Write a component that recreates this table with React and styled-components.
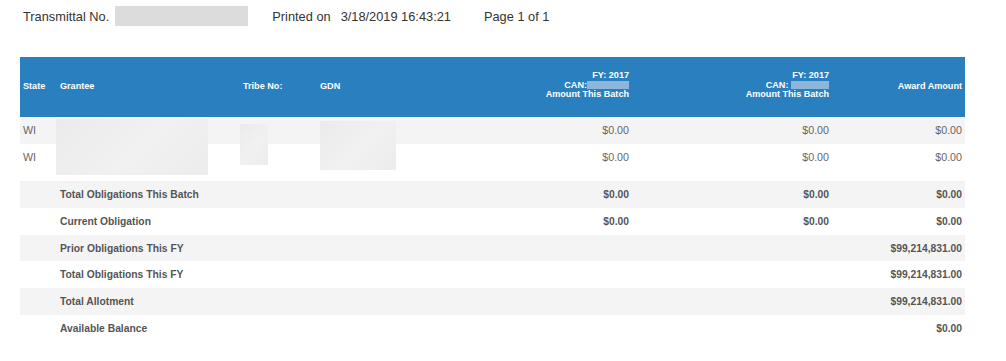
import React from "react";
import styled, { createGlobalStyle } from "styled-components";

const Global = createGlobalStyle`
  html, body { margin: 0; padding: 0; background: #fff; }
  body { font-family: "Liberation Sans", Arial, sans-serif; }
`;

const Page = styled.div`
  width: 1006px;
  padding: 6px 20px 0 20px;
  box-sizing: border-box;
`;

const TitleBar = styled.div`
  display: flex;
  align-items: center;
  height: 20px;
  padding-left: 3px;
  margin-bottom: 31px;
  font-size: 12.8px;
  color: #333;
`;

const TitleText = styled.span`
  margin-left: ${(p) => p.$gap || 0}px;
  white-space: nowrap;
`;

const RedactBar = styled.span`
  display: inline-block;
  width: 133px;
  height: 20px;
  margin-left: 6px;
  background: #dcdcdc;
`;

const Table = styled.table`
  width: 945px;
  table-layout: fixed;
  border-collapse: collapse;
  border-spacing: 0;
`;

const HeadRow = styled.tr`
  height: 60px;
  background: #2a7fbe;
`;

const HeadCell = styled.th`
  padding: 0 ${(p) => (p.$right ? p.$pr || 4 : 3)}px ${(p) => (p.$stack ? 3 : 0)}px 3px;
  text-align: ${(p) => (p.$right ? "right" : "left")};
  color: #fff;
  font-size: 9.1px;
  font-weight: bold;
  line-height: 9.5px;
  vertical-align: middle;
  white-space: nowrap;
`;

const CanBox = styled.span`
  display: inline-block;
  width: ${(p) => p.$w}px;
  height: 8px;
  background: #8cb7db;
  vertical-align: -1px;
`;

const Row = styled.tr`
  height: 26.7px;
  background: ${(p) => (p.$shade ? "#f4f4f4" : "#fff")};
`;

const Cell = styled.td`
  position: relative;
  padding: 0 ${(p) => (p.$right ? p.$pr || 4 : 3)}px 0 3px;
  text-align: ${(p) => (p.$right ? "right" : "left")};
  color: ${(p) => (p.$bold ? "#555" : "#666")};
  font-size: ${(p) => (p.$bold ? "10.3px" : "10.7px")};
  font-weight: ${(p) => (p.$bold ? "bold" : "normal")};
  vertical-align: middle;
  white-space: nowrap;
`;

const Blur = styled.div`
  position: absolute;
  left: ${(p) => p.$x}px;
  top: ${(p) => p.$y}px;
  width: ${(p) => p.$w}px;
  height: ${(p) => p.$h}px;
  background: linear-gradient(135deg, #ebebeb 0%, #f1f1f1 55%, #ececec 100%);
  z-index: 1;
`;

const SpacerRow = styled.tr`
  height: 11px;
  border-bottom: 1px solid #f1f1f1;
`;

const summary = [
  ["Total Obligations This Batch", "$0.00", "$0.00", "$0.00"],
  ["Current Obligation", "$0.00", "$0.00", "$0.00"],
  ["Prior Obligations This FY", "", "", "$99,214,831.00"],
  ["Total Obligations This FY", "", "", "$99,214,831.00"],
  ["Total Allotment", "", "", "$99,214,831.00"],
  ["Available Balance", "", "", "$0.00"],
];

export default function App() {
  return (
    <Page>
      <Global />
      <TitleBar>
        <TitleText>Transmittal No.</TitleText>
        <RedactBar />
        <TitleText $gap={24}>Printed on</TitleText>
        <TitleText $gap={10}>3/18/2019 16:43:21</TitleText>
        <TitleText $gap={33}>Page 1 of 1</TitleText>
      </TitleBar>
      <Table>
        <colgroup>
          <col style={{ width: 37 }} />
          <col style={{ width: 183 }} />
          <col style={{ width: 77 }} />
          <col style={{ width: 116 }} />
          <col style={{ width: 200 }} />
          <col style={{ width: 200 }} />
          <col style={{ width: 132 }} />
        </colgroup>
        <thead>
          <HeadRow>
            <HeadCell>State</HeadCell>
            <HeadCell>Grantee</HeadCell>
            <HeadCell>Tribe No:</HeadCell>
            <HeadCell>GDN</HeadCell>
            <HeadCell $right $stack>
              FY: 2017
              <br />
              CAN:<CanBox $w={42} />
              <br />
              Amount This Batch
            </HeadCell>
            <HeadCell $right $stack>
              FY: 2017
              <br />
              CAN: <CanBox $w={38} />
              <br />
              Amount This Batch
            </HeadCell>
            <HeadCell $right $pr={3}>
              Award Amount
            </HeadCell>
          </HeadRow>
        </thead>
        <tbody>
          <Row $shade>
            <Cell>WI</Cell>
            <Cell>
              <Blur $x={-1} $y={2} $w={152} $h={56} />
            </Cell>
            <Cell>
              <Blur $x={0} $y={7} $w={28} $h={41} />
            </Cell>
            <Cell>
              <Blur $x={3} $y={4} $w={76} $h={49} />
            </Cell>
            <Cell $right>$0.00</Cell>
            <Cell $right>$0.00</Cell>
            <Cell $right $pr={3}>$0.00</Cell>
          </Row>
          <Row>
            <Cell>WI</Cell>
            <Cell />
            <Cell />
            <Cell />
            <Cell $right>$0.00</Cell>
            <Cell $right>$0.00</Cell>
            <Cell $right $pr={3}>$0.00</Cell>
          </Row>
          <SpacerRow>
            <td colSpan={7} />
          </SpacerRow>
          {summary.map(([label, a, b, c], i) => (
            <Row key={label} $shade={i % 2 === 0}>
              <Cell />
              <Cell colSpan={3} $bold>
                {label}
              </Cell>
              <Cell $right $bold>{a}</Cell>
              <Cell $right $bold>{b}</Cell>
              <Cell $right $bold $pr={3}>{c}</Cell>
            </Row>
          ))}
        </tbody>
      </Table>
    </Page>
  );
}
